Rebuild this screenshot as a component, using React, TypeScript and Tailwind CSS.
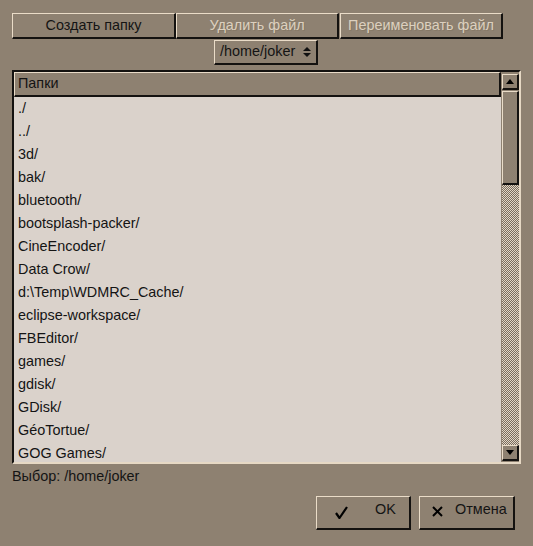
import React from "react";

const rows = [
  "./",
  "../",
  "3d/",
  "bak/",
  "bluetooth/",
  "bootsplash-packer/",
  "CineEncoder/",
  "Data Crow/",
  "d:\\Temp\\WDMRC_Cache/",
  "eclipse-workspace/",
  "FBEditor/",
  "games/",
  "gdisk/",
  "GDisk/",
  "GéoTortue/",
  "GOG Games/",
];

const raised =
  "border-t border-l border-t-[#eadcc8] border-l-[#eadcc8] border-b-2 border-r-2 border-b-[#141210] border-r-[#141210]";

function Tri({ up }: { up?: boolean }) {
  return (
    <svg width="8" height="5" viewBox="0 0 8 5">
      {up ? <path d="M0 5 L4 0 L8 5 Z" fill="#000" /> : <path d="M0 0 L8 0 L4 5 Z" fill="#000" />}
    </svg>
  );
}

export default function App() {
  return (
    <div className="w-[533px] h-[546px] bg-[#8e8171] font-['Liberation_Sans',sans-serif] text-[14.4px] text-[#141414] flex flex-col">
      <div className="flex pt-[13px] pl-[12px]">
        <div className={`w-[164px] h-[26px] flex items-center justify-center ${raised}`}>Создать папку</div>
        <div className={`w-[163px] h-[26px] flex items-center justify-center text-[#dcd0bf] [text-shadow:1px_1px_0_#857866] ${raised}`}>
          Удалить файл
        </div>
        <div className={`ml-[1px] w-[163px] h-[26px] flex items-center justify-center text-[#dcd0bf] [text-shadow:1px_1px_0_#857866] ${raised}`}>
          Переименовать файл
        </div>
      </div>
      <div className="flex justify-center mt-[1px] pr-[1px]">
        <div className={`w-[104px] h-[25px] flex items-center pl-[5px] ${raised}`}>
          <span>/home/joker</span>
          <svg className="ml-[8px]" width="8" height="12" viewBox="0 0 8 12">
            <path d="M0 5 L4 1 L8 5 Z" fill="#111" />
            <path d="M0 7 L8 7 L4 11 Z" fill="#111" />
          </svg>
        </div>
      </div>
      <div className="mt-[5px] ml-[12px] w-[509px] h-[394px] border-t-2 border-l-2 border-t-[#141210] border-l-[#141210] border-b-2 border-r-2 border-b-[#e6d8c4] border-r-[#e6d8c4] flex overflow-hidden">
        <div className="flex-1 flex flex-col overflow-hidden">
          <div className={`h-[25px] shrink-0 flex items-center pl-[3px] ${raised}`}>Папки</div>
          <div className="flex-1 bg-[#dad2cb] overflow-hidden">
            {rows.map((r) => (
              <div key={r} className="h-[23px] flex items-center pl-[4px] whitespace-nowrap">
                {r}
              </div>
            ))}
          </div>
        </div>
        <div className="w-[17px] flex flex-col ml-[1px] pt-[2px] pb-[1px]">
          <div className={`h-[16px] flex items-center justify-center ${raised}`}>
            <Tri up />
          </div>
          <div className={`mt-[1px] h-[94px] ${raised}`} />
          <div className="flex-1 bg-[conic-gradient(#e2d6c6_25%,#7a6d5d_0_50%,#e2d6c6_0_75%,#7a6d5d_0)] bg-[length:2px_2px]" />
          <div className={`h-[16px] flex items-center justify-center ${raised}`}>
            <Tri />
          </div>
        </div>
      </div>
      <div className="ml-[12px] mt-[4px] h-[18px] flex items-center">Выбор: /home/joker</div>
      <div className="flex justify-end gap-[8px] pr-[18px] mt-[10px]">
        <div className={`w-[95px] h-[34px] flex items-center ${raised}`}>
          <svg className="ml-[18px] -mt-[1px]" width="13" height="13" viewBox="0 0 13 13">
            <path d="M1 7 L4.5 12 L12 1" stroke="#000" strokeWidth="2.2" fill="none" strokeLinejoin="round" />
          </svg>
          <span className="ml-[27px] -mt-[6px]">OK</span>
        </div>
        <div className={`w-[96px] h-[34px] flex items-center ${raised}`}>
          <svg className="ml-[12px] -mt-[3px]" width="11" height="11" viewBox="0 0 11 11">
            <path d="M1 1 L10 10 M10 1 L1 10" stroke="#000" strokeWidth="2" />
          </svg>
          <span className="ml-[12px] -mt-[6px]">Отмена</span>
        </div>
      </div>
    </div>
  );
}
